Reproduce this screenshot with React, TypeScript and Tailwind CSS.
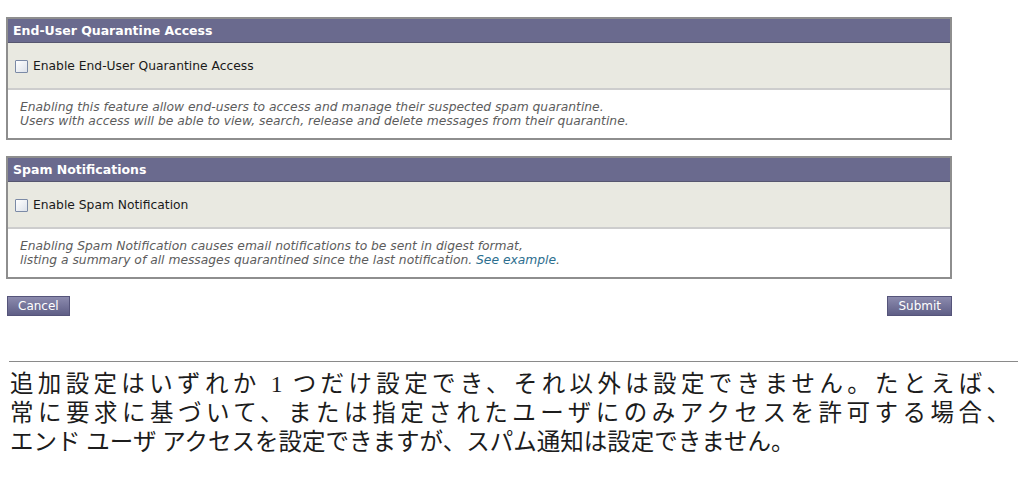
import type { ReactNode } from "react";

type PanelProps = {
  title: string;
  label: string;
  children: ReactNode;
};

/**
 * Small square checkbox in the old appliance style.
 */
function Checkbox(): React.ReactElement {
  return (
    <span className="block h-[13px] w-[13px] rounded-[1px] border border-[#7b8aa6] bg-linear-to-br from-white to-[#dde2ea]" />
  );
}

/**
 * Settings panel: title bar, one checkbox row and an italic note.
 */
function Panel({ title, label, children }: PanelProps): React.ReactElement {
  return (
    <section className="border-2 border-[#8e8e8e] bg-white">
      <h2 className="h-[24px] border-b border-[#56566f] bg-[#6a6a8e] px-[5px] text-[12.5px] font-bold leading-[23px] text-white">
        {title}
      </h2>
      <div className="flex h-[47px] items-center gap-[5px] border-b-2 border-[#cdcdcd] bg-[#e9e9e1] pl-[7px] pt-[2px]">
        <Checkbox />
        <span className="text-[12.3px] text-[#1a1a1a]">{label}</span>
      </div>
      <div className="h-[48px] pl-[12px] pt-[10px] text-[12.3px] italic leading-[14px] text-[#5c5c5c]">
        {children}
      </div>
    </section>
  );
}

function Button({ children }: { children: ReactNode }): React.ReactElement {
  return (
    <button
      type="button"
      className="h-[20px] border border-[#55547a] bg-linear-to-b from-[#8c8bae] to-[#5f5e86] px-[10px] text-[12px] leading-[18px] text-white"
    >
      {children}
    </button>
  );
}

export default function App(): React.ReactElement {
  return (
    <div className="h-[477px] w-[1018px] overflow-hidden bg-white font-['DejaVu_Sans',Verdana,sans-serif]">
      <div className="flex w-[952px] flex-col gap-[16px] pl-[6px] pt-[17px]">
        <Panel title="End-User Quarantine Access" label="Enable End-User Quarantine Access">
          <p>Enabling this feature allow end-users to access and manage their suspected spam quarantine.</p>
          <p>Users with access will be able to view, search, release and delete messages from their quarantine.</p>
        </Panel>
        <Panel title="Spam Notifications" label="Enable Spam Notification">
          <p>Enabling Spam Notification causes email notifications to be sent in digest format,</p>
          <p>
            listing a summary of all messages quarantined since the last notification.{" "}
            <a className="text-[#2c6e8e]">See example</a>.
          </p>
        </Panel>
        <div className="mt-[1px] flex justify-between pl-[1px]">
          <Button>Cancel</Button>
          <Button>Submit</Button>
        </div>
      </div>

      <div className="ml-[9px] mt-[45px] border-t border-[#8a8a8a] pl-[1px] pr-[8px] pt-[8px] font-['Liberation_Serif','Noto_Sans_CJK_JP',serif] text-[23.5px] leading-[29px] text-[#1c1c1c]">
        <p className="text-justify [text-align-last:justify]">
          追加設定はいずれか 1 つだけ設定でき、それ以外は設定できません。たとえば、
        </p>
        <p className="text-justify [text-align-last:justify]">
          常に要求に基づいて、または指定されたユーザにのみアクセスを許可する場合、
        </p>
        <p>エンド ユーザ アクセスを設定できますが、スパム通知は設定できません。</p>
      </div>
    </div>
  );
}
